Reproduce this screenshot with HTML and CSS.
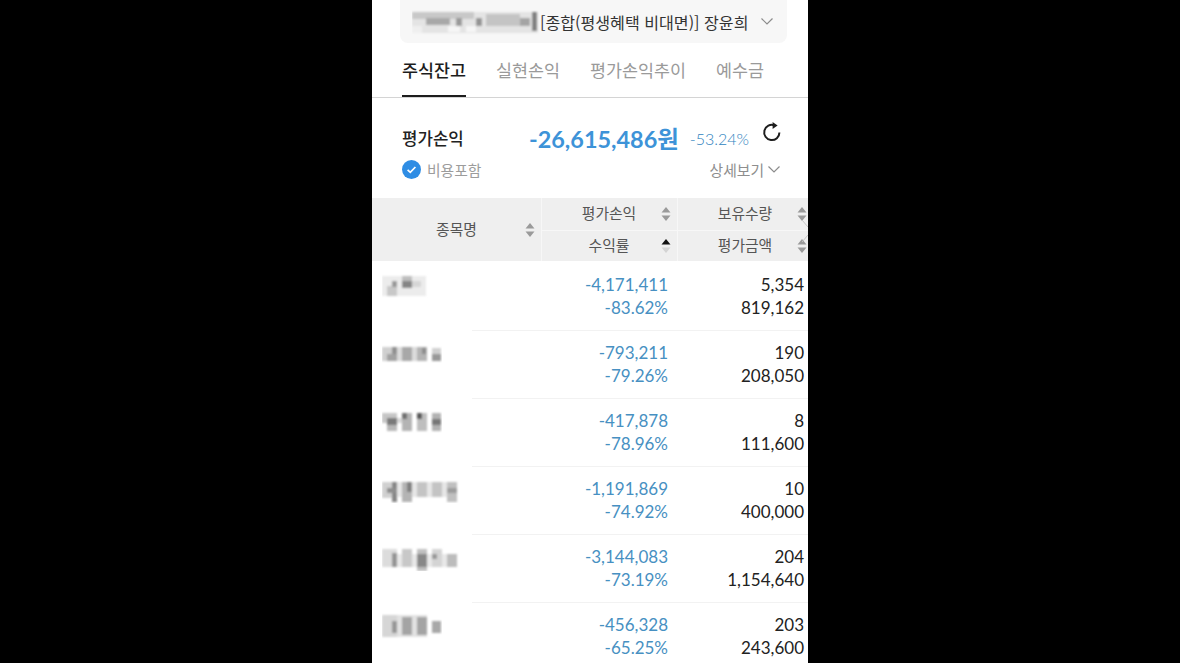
FILE: index.html
```html
<!DOCTYPE html>
<html lang="ko">
<head>
  <meta charset="UTF-8">
  <meta name="viewport" content="width=device-width, initial-scale=1.0">
  <title>주식잔고</title>
  <link rel="stylesheet" href="styles.css">
</head>
<body>
  <svg class="defs" width="0" height="0" aria-hidden="true">
    <defs>
      <filter id="soft" x="-10%" y="-20%" width="120%" height="140%"><feGaussianBlur stdDeviation="1"/></filter>
      <symbol id="sort" viewBox="0 0 10 16">
        <path d="M5 1 L9.5 6.5 H0.5 Z"/>
        <path d="M0.5 9.5 H9.5 L5 15 Z"/>
      </symbol>
    </defs>
  </svg>

  <div class="phone">
    <div class="account">
      <svg class="mosaic account-no" width="128" height="26" viewBox="0 0 128 26">
        <g filter="url(#soft)">
          <rect x="0" y="3" width="126" height="21" fill="#e4e4e4"/>
          <rect x="0" y="3" width="62" height="7" fill="#c8c8c8"/>
          <rect x="14" y="9" width="24" height="7" fill="#a8a8a8"/>
          <rect x="44" y="9" width="6" height="8" fill="#9a9a9a"/>
          <rect x="64" y="9" width="6" height="8" fill="#949494"/>
          <rect x="74" y="5" width="34" height="12" fill="#c4c4c4"/>
          <rect x="108" y="9" width="10" height="8" fill="#a4a4a4"/>
          <rect x="120" y="3" width="5" height="19" fill="#808080"/>
          <rect x="36" y="17" width="12" height="6" fill="#f6f6f6"/>
          <rect x="54" y="17" width="10" height="6" fill="#f6f6f6"/>
          <rect x="0" y="17" width="10" height="7" fill="#efefef"/>
        </g>
      </svg>
      <span class="account-name">[종합(평생혜택 비대면)] 장윤희</span>
      <svg class="chevron account-chevron" width="12" height="7" viewBox="0 0 12 7"><path d="M0.5 0.5 L6 6 L11.5 0.5"/></svg>
    </div>

    <nav class="tabs">
      <a class="tab active">주식잔고</a>
      <a class="tab">실현손익</a>
      <a class="tab">평가손익추이</a>
      <a class="tab">예수금</a>
    </nav>

    <section class="summary">
      <div class="summary-top">
        <span class="summary-label">평가손익</span>
        <span class="summary-amount">-26,615,486원</span>
        <span class="summary-rate">-53.24%</span>
        <svg class="refresh" width="20" height="20" viewBox="0 0 20 20">
          <path d="M12.6 3.4 A7.6 7.6 0 1 0 17.4 10.4"/>
          <path class="refresh-head" d="M10.6 0 L15.6 3.6 L10.6 7 Z"/>
        </svg>
      </div>
      <div class="summary-bottom">
        <label class="include">
          <svg width="19" height="19" viewBox="0 0 19 19">
            <circle cx="9.5" cy="9.5" r="9.5" fill="#2f8de4"/>
            <path d="M5.6 9.8 L8.3 12.3 L13.4 7" fill="none" stroke="#fff" stroke-width="1.7"/>
          </svg>
          비용포함
        </label>
        <a class="detail">상세보기
          <svg class="chevron" width="12" height="7" viewBox="0 0 12 7"><path d="M0.5 0.5 L6 6 L11.5 0.5"/></svg>
        </a>
      </div>
    </section>

    <div class="thead">
      <div class="th th-name">종목명 <svg class="sort sort-name"><use href="#sort"/></svg></div>
      <div class="th th-mid">평가손익 <svg class="sort"><use href="#sort"/></svg></div>
      <div class="th th-right">보유수량 <svg class="sort"><use href="#sort"/></svg></div>
      <div class="th th-mid">수익률
        <svg class="sort sort-active" viewBox="0 0 10 16"><path class="up" d="M5 1 L9.5 6.5 H0.5 Z"/><path class="down" d="M0.5 9.5 H9.5 L5 15 Z"/></svg>
      </div>
      <div class="th th-right">평가금액 <svg class="sort"><use href="#sort"/></svg></div>
      <svg class="scroll-hint" width="6" height="26" viewBox="0 0 6 26"><path d="M0 2 L6 9 M6 17 L0 24"/></svg>
    </div>

    <div class="row">
      <svg class="mosaic" width="60" height="26" viewBox="0 0 60 26"><g filter="url(#soft)">
        <rect x="0" y="3" width="44" height="20" fill="#ececec"/>
        <rect x="5" y="13" width="10" height="10" fill="#c8c8c8"/>
        <rect x="10" y="8" width="5" height="6" fill="#989898"/>
        <rect x="20" y="3" width="10" height="6" fill="#bebebe"/>
        <rect x="20" y="8" width="10" height="7" fill="#858585"/>
        <rect x="30" y="8" width="9" height="6" fill="#d6d6d6"/>
      </g></svg>
      <div class="num loss">-4,171,411<br>-83.62%</div>
      <div class="num">5,354<br>819,162</div>
    </div>
    <div class="row">
      <svg class="mosaic" width="60" height="26" viewBox="0 0 60 26"><g filter="url(#soft)">
        <rect x="0" y="6" width="45" height="14" fill="#dcdcdc"/>
        <rect x="0" y="6" width="15" height="14" fill="#d0d0d0"/>
        <rect x="10" y="6" width="5" height="7" fill="#909090"/>
        <rect x="5" y="13" width="10" height="7" fill="#a2a2a2"/>
        <rect x="20" y="6" width="10" height="14" fill="#a8a8a8"/>
        <rect x="35" y="6" width="10" height="14" fill="#b4b4b4"/>
        <rect x="40" y="7" width="4" height="6" fill="#8c8c8c"/>
        <rect x="50" y="7" width="9" height="6" fill="#d0d0d0"/>
        <rect x="50" y="13" width="9" height="7" fill="#989898"/>
      </g></svg>
      <div class="num loss">-793,211<br>-79.26%</div>
      <div class="num">190<br>208,050</div>
    </div>
    <div class="row">
      <svg class="mosaic" width="60" height="26" viewBox="0 0 60 26"><g filter="url(#soft)">
        <rect x="0" y="4" width="15" height="10" fill="#c6c6c6"/>
        <rect x="5" y="9" width="10" height="7" fill="#7a7a7a"/>
        <rect x="5" y="16" width="10" height="6" fill="#b8b8b8"/>
        <rect x="15" y="9" width="5" height="5" fill="#d8d8d8"/>
        <rect x="20" y="4" width="10" height="18" fill="#b4b4b4"/>
        <rect x="20" y="4" width="5" height="6" fill="#707070"/>
        <rect x="35" y="4" width="10" height="18" fill="#bebebe"/>
        <rect x="35" y="4" width="5" height="6" fill="#585858"/>
        <rect x="50" y="4" width="9" height="18" fill="#b2b2b2"/>
        <rect x="50" y="10" width="9" height="6" fill="#767676"/>
      </g></svg>
      <div class="num loss">-417,878<br>-78.96%</div>
      <div class="num">8<br>111,600</div>
    </div>
    <div class="row">
      <svg class="mosaic" width="80" height="26" viewBox="0 0 80 26"><g filter="url(#soft)">
        <rect x="0" y="5" width="75" height="15" fill="#e6e6e6"/>
        <rect x="0" y="5" width="15" height="16" fill="#d0d0d0"/>
        <rect x="10" y="5" width="5" height="20" fill="#868686"/>
        <rect x="5" y="11" width="10" height="5" fill="#8e8e8e"/>
        <rect x="20" y="5" width="10" height="20" fill="#b4b4b4"/>
        <rect x="25" y="5" width="5" height="10" fill="#808080"/>
        <rect x="35" y="5" width="10" height="15" fill="#c4c4c4"/>
        <rect x="50" y="5" width="10" height="15" fill="#c4c4c4"/>
        <rect x="65" y="5" width="10" height="20" fill="#c0c0c0"/>
        <rect x="65" y="11" width="10" height="5" fill="#9c9c9c"/>
      </g></svg>
      <div class="num loss">-1,191,869<br>-74.92%</div>
      <div class="num">10<br>400,000</div>
    </div>
    <div class="row">
      <svg class="mosaic" width="80" height="26" viewBox="0 0 80 26"><g filter="url(#soft)">
        <rect x="0" y="9" width="75" height="13" fill="#e8e8e8"/>
        <rect x="0" y="4" width="15" height="18" fill="#dcdcdc"/>
        <rect x="10" y="8" width="5" height="14" fill="#949494"/>
        <rect x="20" y="4" width="10" height="18" fill="#c8c8c8"/>
        <rect x="35" y="4" width="10" height="22" fill="#c0c0c0"/>
        <rect x="35" y="9" width="10" height="13" fill="#888888"/>
        <rect x="50" y="4" width="10" height="18" fill="#d4d4d4"/>
        <rect x="50" y="9" width="5" height="5" fill="#989898"/>
        <rect x="65" y="9" width="10" height="13" fill="#bcbcbc"/>
      </g></svg>
      <div class="num loss">-3,144,083<br>-73.19%</div>
      <div class="num">204<br>1,154,640</div>
    </div>
    <div class="row">
      <svg class="mosaic" width="60" height="26" viewBox="0 0 60 26"><g filter="url(#soft)">
        <rect x="0" y="2" width="45" height="22" fill="#e2e2e2"/>
        <rect x="0" y="2" width="15" height="22" fill="#d6d6d6"/>
        <rect x="10" y="8" width="5" height="12" fill="#969696"/>
        <rect x="20" y="4" width="10" height="18" fill="#a4a4a4"/>
        <rect x="35" y="4" width="10" height="18" fill="#a4a4a4"/>
        <rect x="50" y="8" width="9" height="12" fill="#a8a8a8"/>
      </g></svg>
      <div class="num loss">-456,328<br>-65.25%</div>
      <div class="num">203<br>243,600</div>
    </div>
  </div>
</body>
</html>
```

FILE: styles.css
```css
body {
  margin: 0;
  background-color: #000;
  font-family: "Noto Sans CJK KR", "Noto Sans", sans-serif;
  color: #222;
  overflow: hidden;
}

.defs {
  position: absolute;
}

.phone {
  position: relative;
  box-sizing: border-box;
  width: 436px;
  height: 663px;
  margin: 0 auto;
  background-color: #fff;
  overflow: hidden;
}

.mosaic {
  display: block;
}

.chevron path {
  fill: none;
  stroke: #8c8c8c;
  stroke-width: 1.2;
}

/* account selector */
.account {
  display: flex;
  align-items: center;
  box-sizing: border-box;
  height: 43px;
  margin: 0 21px 0 28px;
  padding: 0 14px 0 12px;
  background-color: #f7f7f7;
  border-radius: 0 0 8px 8px;
}

.account-no {
  flex: none;
}

.account-name {
  font-size: 16.1px;
  color: #333;
  white-space: nowrap;
}

.account-chevron {
  margin-left: auto;
}

/* tabs */
.tabs {
  display: flex;
  gap: 30px;
  box-sizing: border-box;
  height: 55px;
  padding: 0 30px;
  border-bottom: 1px solid #d4d4d4;
}

.tab {
  box-sizing: border-box;
  height: 54px;
  line-height: 53px;
  font-size: 17.4px;
  color: #9a9a9a;
  white-space: nowrap;
}

.tab.active {
  color: #1d1d1d;
  font-weight: 500;
  border-bottom: 2px solid #1d1d1d;
}

/* summary */
.summary {
  box-sizing: border-box;
  height: 100px;
  padding: 22px 28px 0 30px;
}

.summary-top {
  display: flex;
  align-items: center;
  height: 36px;
  margin-right: -10px;
}

.summary-label {
  flex: none;
  width: 127px;
  font-size: 16.8px;
  font-weight: 500;
}

.summary-amount {
  flex: none;
  font-family: Lato, "Noto Sans CJK KR", sans-serif;
  font-size: 23.4px;
  font-weight: 700;
  color: #3d93d8;
  white-space: nowrap;
}

.summary-rate {
  flex: none;
  margin-left: 11px;
  font-family: Lato, sans-serif;
  font-size: 16px;
  font-weight: 300;
  color: #2f84c0;
}

.refresh {
  flex: none;
  margin: -12px 0 0 13px;
}

.refresh path {
  fill: none;
  stroke: #1d1d1d;
  stroke-width: 2;
}

.refresh .refresh-head {
  fill: #1d1d1d;
  stroke: none;
}

.summary-bottom {
  display: flex;
  justify-content: space-between;
  align-items: center;
  height: 24px;
  margin-top: 1px;
}

.include {
  display: flex;
  align-items: center;
  gap: 6px;
  font-size: 14.8px;
  color: #9c9c9c;
}

.detail {
  display: flex;
  align-items: center;
  gap: 4px;
  font-size: 14.8px;
  color: #8e8e8e;
}

/* table head */
.thead {
  position: relative;
  display: grid;
  grid-template-columns: 169px 136px 131px;
  grid-template-rows: 32px 31px;
  background-color: #efefef;
}

.th {
  display: flex;
  align-items: center;
  justify-content: center;
  position: relative;
  font-size: 14.8px;
  line-height: 20px;
  color: #555;
  padding-bottom: 2px;
}

.th-name {
  grid-row: 1 / 3;
  box-sizing: border-box;
}

.th-mid,
.th-right {
  border-left: 1px solid #f7f7f7;
}

.th-mid {
  padding-left: 1px;
  padding-right: 2px;
}

.th-right {
  padding-left: 4px;
}

.th:nth-child(n+4) {
  border-top: 1px solid #f7f7f7;
}

.sort {
  position: absolute;
  right: 6px;
  top: 50%;
  width: 10px;
  height: 16px;
  margin-top: -8px;
  fill: #9a9a9a;
}

.th-right .sort {
  right: 1px;
}

.sort-name {
  right: 6px;
}

.sort-active .up {
  fill: #111;
}

.sort-active .down {
  fill: #d4d4d4;
}

.scroll-hint {
  position: absolute;
  right: 0;
  top: 20px;
}

.scroll-hint path {
  fill: none;
  stroke: #c4c4c4;
}

/* rows */
.row {
  position: relative;
  display: grid;
  grid-template-columns: 169px 127px 136px;
  align-items: start;
  box-sizing: border-box;
  height: 68px;
  padding-top: 12px;
}

.row .mosaic {
  margin-left: 10px;
}

.row::after {
  content: "";
  position: absolute;
  left: 100px;
  right: 0;
  bottom: -2px;
  border-bottom: 1px solid #f2f2f2;
}

.num {
  font-family: Lato, sans-serif;
  font-size: 17px;
  line-height: 23px;
  text-align: right;
  color: #222;
}

.num.loss {
  color: #4790c2;
}
```
